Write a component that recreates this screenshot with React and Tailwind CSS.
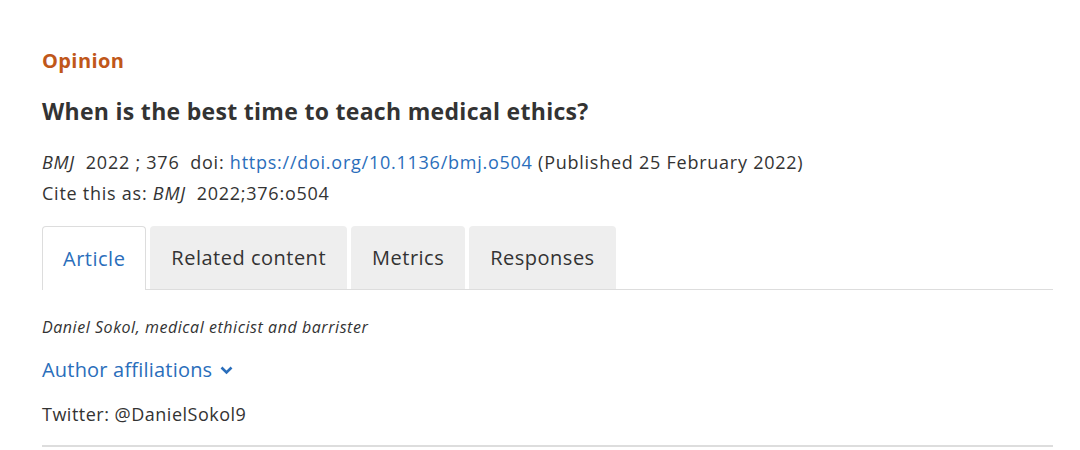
export default function App() {
  const tabs = ["Article", "Related content", "Metrics", "Responses"];

  return (
    <div className="min-h-screen bg-white font-['Open_Sans','Liberation_Sans',sans-serif] text-[#333]">
      <div className="ml-[42px] w-[1011px] pt-[47px]">
        <p className="text-[20px] font-bold leading-[28px] tracking-[0.4px] text-[#c0571a]">Opinion</p>
        <h1 className="mt-[21px] text-[23px] font-bold leading-[30px] tracking-[0.3px] text-[#333]">
          When is the best time to teach medical ethics?
        </h1>

        <div className="mt-[21px] text-[18px] leading-[31px] tracking-[0.75px] text-[#333]">
          <p>
            <i>BMJ</i>&nbsp; 2022 ; 376 &nbsp;doi:{" "}
            <a className="text-[#2a6ebb]" href="#">
              https://doi.org/10.1136/bmj.o504
            </a>{" "}
            (Published 25 February 2022)
          </p>
          <p>
            Cite this as: <i>BMJ</i>&nbsp; 2022;376:o504
          </p>
        </div>

        <div className="mt-[17px] flex gap-[4px] border-b border-[#ddd]">
          {tabs.map((t, i) => (
            <button
              key={t}
              className={
                i === 0
                  ? "-mb-px h-[64px] rounded-t-[4px] border border-b-0 border-[#ddd] bg-white px-[20px] text-[20px] tracking-[0.5px] text-[#2a6ebb]"
                  : "h-[63px] rounded-t-[4px] bg-[#eee] px-[21px] text-[20px] tracking-[0.5px] text-[#333]"
              }
            >
              {t}
            </button>
          ))}
        </div>

        <p className="mt-[26px] text-[16px] italic leading-[22px] tracking-[0.55px] text-[#333]">
          Daniel Sokol, medical ethicist and barrister
        </p>

        <button className="mt-[18px] flex items-center gap-[8px] text-[20px] leading-[28px] tracking-[0.2px] text-[#2a6ebb]">
          Author affiliations
          <svg width="13" height="9" viewBox="0 0 13 9" fill="none">
            <path d="M1.5 1.5 L6.5 6.5 L11.5 1.5" stroke="#2a6ebb" strokeWidth="2.6" />
          </svg>
        </button>

        <p className="mt-[18px] text-[18px] leading-[24px] tracking-[0.5px] text-[#333]">Twitter: @DanielSokol9</p>

        <div className="mt-[19px] border-b-2 border-[#ddd]" />
      </div>
    </div>
  );
}
